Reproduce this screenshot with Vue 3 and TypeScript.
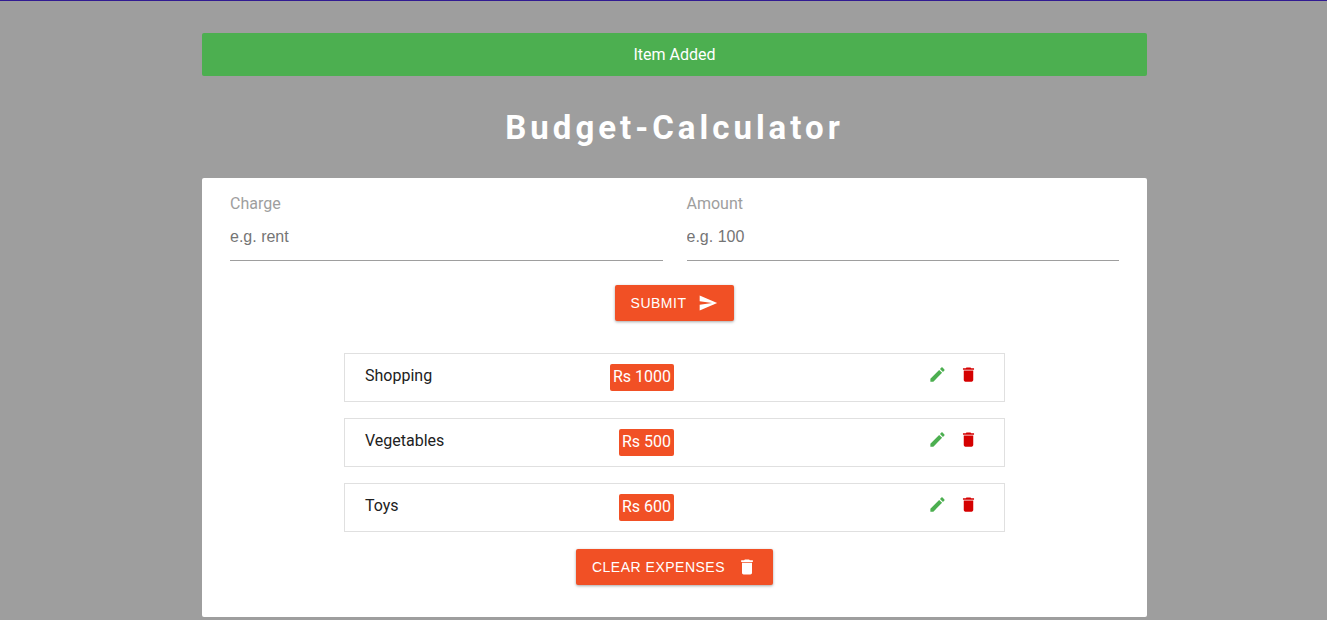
<script setup lang="ts">
import { ref } from 'vue'

interface Expense {
  id: number
  charge: string
  amount: number
}

const charge = ref('')
const amount = ref('')
const alertText = ref('Item Added')
const editId = ref<number | null>(null)
const expenses = ref<Expense[]>([
  { id: 1, charge: 'Shopping', amount: 1000 },
  { id: 2, charge: 'Vegetables', amount: 500 },
  { id: 3, charge: 'Toys', amount: 600 },
])

function submit() {
  const value = Number(amount.value)
  if (!charge.value || !(value > 0)) return
  if (editId.value !== null) {
    expenses.value = expenses.value.map((e) =>
      e.id === editId.value ? { ...e, charge: charge.value, amount: value } : e,
    )
    editId.value = null
    alertText.value = 'Item Edited'
  } else {
    expenses.value.push({ id: Date.now(), charge: charge.value, amount: value })
    alertText.value = 'Item Added'
  }
  charge.value = ''
  amount.value = ''
}

function edit(item: Expense) {
  charge.value = item.charge
  amount.value = String(item.amount)
  editId.value = item.id
}

function remove(id: number) {
  expenses.value = expenses.value.filter((e) => e.id !== id)
  alertText.value = 'Item Deleted'
}

function clearAll() {
  expenses.value = []
  alertText.value = 'All Items Deleted'
}
</script>

<template>
  <div class="page">
    <div class="alert" role="status">{{ alertText }}</div>
    <h1>Budget-Calculator</h1>
    <main class="card">
      <form @submit.prevent="submit">
        <div class="fields">
          <div class="field">
            <label for="charge">Charge</label>
            <input id="charge" v-model="charge" type="text" placeholder="e.g. rent" />
          </div>
          <div class="field">
            <label for="amount">Amount</label>
            <input id="amount" v-model="amount" type="text" inputmode="numeric" placeholder="e.g. 100" />
          </div>
        </div>
        <button type="submit" class="btn">
          Submit
          <svg class="icon" viewBox="0 0 24 24" aria-hidden="true">
            <path d="M2.01 21L23 12 2.01 3 2 10l15 2-15 2z" />
          </svg>
        </button>
      </form>
      <ul class="list">
        <li v-for="item in expenses" :key="item.id" class="item">
          <span class="name">{{ item.charge }}</span>
          <span class="amount">Rs {{ item.amount }}</span>
          <div class="actions">
            <button type="button" class="edit" aria-label="Edit" @click="edit(item)">
              <svg class="icon" viewBox="0 0 24 24" aria-hidden="true">
                <path d="M3 17.25V21h3.75L17.81 9.94l-3.75-3.75L3 17.25zM20.71 7.04c.39-.39.39-1.02 0-1.41l-2.34-2.34c-.39-.39-1.02-.39-1.41 0l-1.83 1.83 3.75 3.75 1.83-1.83z" />
              </svg>
            </button>
            <button type="button" class="delete" aria-label="Delete" @click="remove(item.id)">
              <svg class="icon" viewBox="0 0 24 24" aria-hidden="true">
                <path d="M6 19c0 1.1.9 2 2 2h8c1.1 0 2-.9 2-2V7H6v12zM19 4h-3.5l-1-1h-5l-1 1H5v2h14V4z" />
              </svg>
            </button>
          </div>
        </li>
      </ul>
      <button type="button" class="btn" @click="clearAll">
        Clear expenses
        <svg class="icon" viewBox="0 0 24 24" aria-hidden="true">
          <path d="M6 19c0 1.1.9 2 2 2h8c1.1 0 2-.9 2-2V7H6v12zM19 4h-3.5l-1-1h-5l-1 1H5v2h14V4z" />
        </svg>
      </button>
    </main>
  </div>
</template>

<style>
body {
  margin: 0;
  background: #9e9e9e;
}
</style>

<style scoped>
.page {
  box-sizing: border-box;
  min-height: 100vh;
  padding: 32px 180px 3px 202px;
  border-top: 1px solid #311b92;
  background: #9e9e9e;
  color: #212121;
  font-family: Roboto, "Liberation Sans", sans-serif;
  font-size: 16px;
  line-height: 24px;
}
.alert {
  padding: 10px 16px 9px;
  border-radius: 2px;
  background: #4caf50;
  color: #fff;
  text-align: center;
}
h1 {
  margin: 28px 0 26px;
  color: #fff;
  font-size: 33px;
  font-weight: 700;
  line-height: 48px;
  letter-spacing: 4px;
  text-align: center;
}
.card {
  padding: 14px 28px 32px;
  border-radius: 2px;
  background: #fff;
}
.fields {
  display: grid;
  grid-template-columns: 1fr 1fr;
  gap: 24px;
  margin-bottom: 24px;
}
.field {
  display: flex;
  flex-direction: column;
}
label {
  color: #9e9e9e;
}
input {
  box-sizing: border-box;
  width: 100%;
  height: 45px;
  padding: 0 0 2px;
  border: 0;
  border-bottom: 1px solid #9e9e9e;
  outline: 0;
  background: transparent;
  font-family: "Liberation Sans", Arial, sans-serif;
  font-size: 16px;
}
input::placeholder {
  color: #757575;
}
.icon {
  display: block;
  width: 20px;
  height: 20px;
  fill: currentColor;
}
.btn {
  display: flex;
  align-items: center;
  gap: 12px;
  height: 36px;
  margin: 0 auto;
  padding: 0 16px;
  border: 0;
  border-radius: 2px;
  background: #f15025;
  box-shadow: 0 1px 3px rgba(0, 0, 0, 0.35);
  color: #fff;
  font-family: "Liberation Sans", Arial, sans-serif;
  font-size: 14px;
  letter-spacing: 0.5px;
  text-transform: uppercase;
  cursor: pointer;
}
.list {
  display: grid;
  gap: 16px;
  max-width: 661px;
  margin: 32px auto 17px;
  padding: 0;
  list-style: none;
}
.item {
  display: grid;
  grid-template-columns: 1fr 1fr 2fr;
  align-items: start;
  padding: 10px 21px 10px 20px;
  border: 1px solid #e0e0e0;
}
.amount {
  justify-self: end;
  padding: 1px 3px 2px;
  border-radius: 2px;
  background: #f15025;
  color: #fff;
}
.actions {
  display: flex;
  justify-content: flex-end;
  gap: 12px;
  padding: 1px 5px 0 0;
}
.actions button {
  padding: 0;
  border: 0;
  background: none;
  cursor: pointer;
}
.actions .icon {
  width: 19px;
  height: 19px;
}
.edit {
  color: #4caf50;
}
.delete {
  color: #d50000;
}
</style>
